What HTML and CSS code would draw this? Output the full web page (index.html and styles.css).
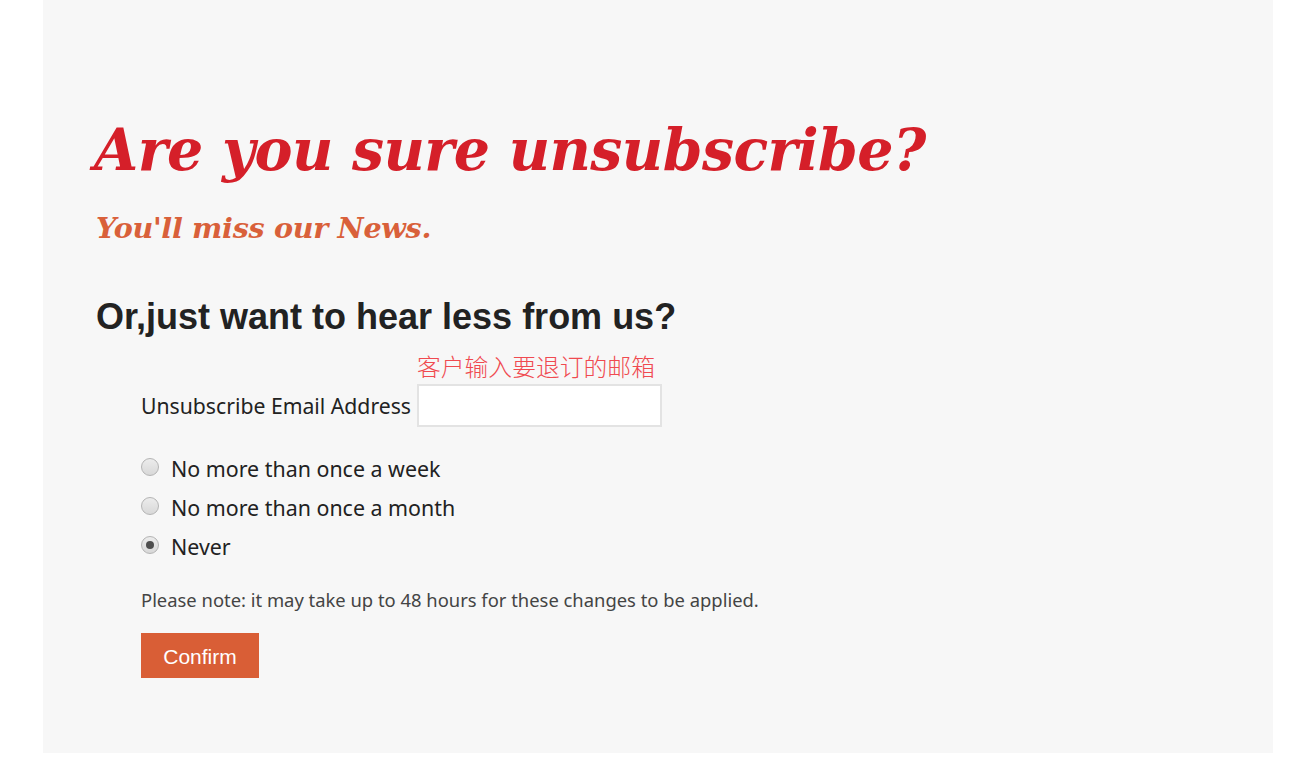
FILE: index.html
```html
<!DOCTYPE html>
<html lang="en">
<head>
<meta charset="utf-8">
<title>Unsubscribe</title>
<link rel="stylesheet" href="styles.css">
</head>
<body>
<main class="panel">
  <h1 class="title">Are you sure unsubscribe?</h1>
  <p class="subtitle">You'll miss our News.</p>
  <h2 class="heading">Or,just want to hear less from us?</h2>
  <form class="form">
    <div class="email-row">
      <label class="email-label" for="email">Unsubscribe Email Address</label>
      <div class="email-field">
        <span class="hint">客户输入要退订的邮箱</span>
        <input class="email-input" id="email" type="text">
      </div>
    </div>
    <div class="options">
      <label class="option"><input class="radio" type="radio" name="freq"><span>No more than once a week</span></label>
      <label class="option"><input class="radio" type="radio" name="freq"><span>No more than once a month</span></label>
      <label class="option"><input class="radio" type="radio" name="freq" checked><span>Never</span></label>
    </div>
    <p class="note">Please note: it may take up to 48 hours for these changes to be applied.</p>
    <button class="confirm" type="button">Confirm</button>
  </form>
</main>
</body>
</html>
```
FILE: styles.css
```css
html, body {
  margin: 0;
  padding: 0;
  background: #ffffff;
}

.panel {
  box-sizing: border-box;
  margin-left: 43px;
  width: 1230px;
  height: 753px;
  background: #f7f7f7;
  padding: 112px 0 0 53px;
}

.title {
  margin: 0;
  font-family: "DejaVu Serif", Georgia, serif;
  font-style: italic;
  font-weight: bold;
  font-size: 57px;
  line-height: 76px;
  color: #d51f29;
  margin-left: -2px;
  letter-spacing: -0.6px;
}

.subtitle {
  margin: 20px 0 0 0;
  font-family: "DejaVu Serif", Georgia, serif;
  font-style: italic;
  font-weight: bold;
  font-size: 28.6px;
  line-height: 40px;
  color: #d9603a;
  letter-spacing: -0.3px;
}

.heading {
  margin: 47px 0 0 0;
  font-family: "Liberation Sans", Arial, sans-serif;
  font-weight: bold;
  font-size: 36px;
  line-height: 44px;
  color: #222222;
}

.form {
  margin: 15px 0 0 45px;
  font-family: "Noto Sans", "Open Sans", sans-serif;
  color: #222222;
}

.email-row {
  display: flex;
  align-items: flex-end;
  gap: 6px;
}

.email-label {
  font-size: 21.2px;
  line-height: 26px;
  padding-bottom: 8px;
}

.email-field {
  display: flex;
  flex-direction: column;
}

.hint {
  font-family: "Noto Sans CJK SC", sans-serif;
  font-weight: 300;
  font-size: 23.8px;
  line-height: 30px;
  color: #f04a50;
  position: relative;
  top: -3px;
}

.email-input {
  box-sizing: border-box;
  width: 245px;
  height: 43px;
  margin: 0;
  border: 2px solid #e3e3e3;
  background: #ffffff;
  outline: none;
}

.options {
  display: flex;
  flex-direction: column;
  gap: 11px;
  margin-top: 28px;
}

.option {
  display: flex;
  align-items: center;
  gap: 12px;
  font-size: 21.4px;
  line-height: 28px;
}

.radio {
  appearance: none;
  -webkit-appearance: none;
  box-sizing: border-box;
  width: 18px;
  height: 18px;
  margin: 0;
  border-radius: 50%;
  border: 1px solid #b4b4b4;
  background: linear-gradient(#ececec, #d8d8d8);
  display: flex;
  align-items: center;
  justify-content: center;
  position: relative;
  top: -2px;
}

.radio:checked::after {
  content: "";
  width: 8px;
  height: 8px;
  border-radius: 50%;
  background: #4d4d4d;
}

.note {
  margin: 27px 0 0 0;
  font-size: 18.4px;
  line-height: 24px;
  color: #444444;
}

.confirm {
  margin-top: 21px;
  width: 118px;
  height: 45px;
  border: none;
  background: #d95e36;
  color: #ffffff;
  font-family: "Liberation Sans", Arial, sans-serif;
  font-size: 21px;
  padding: 3px 0 0 0;
  cursor: pointer;
}
```
